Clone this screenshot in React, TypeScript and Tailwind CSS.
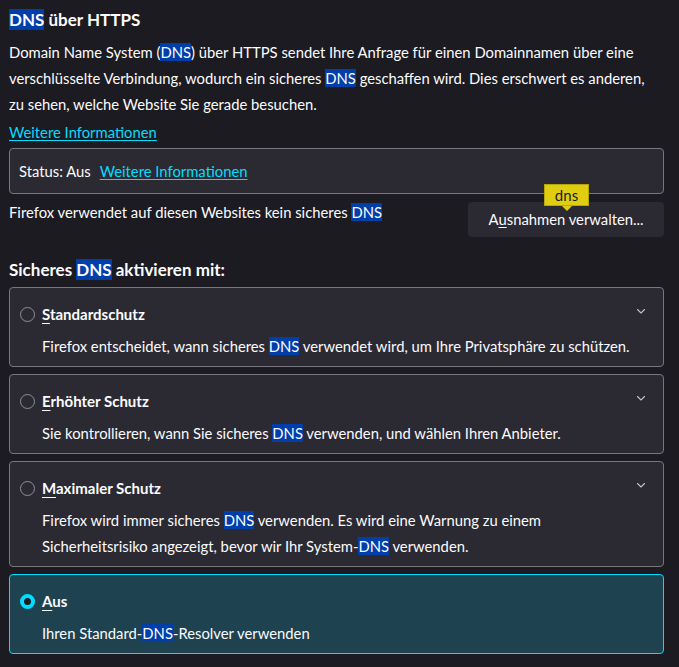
import React from "react";

const Hl = ({ children }: { children: React.ReactNode }) => (
  <span className="bg-[#003eaa] text-[#fbfbfe]">{children}</span>
);

const Chevron = () => (
  <svg width="12" height="12" viewBox="0 0 12 12" className="text-[#bfbfc9]">
    <path d="M2.5 4.5 L6 8 L9.5 4.5" fill="none" stroke="currentColor" strokeWidth="1.1" strokeLinecap="round" strokeLinejoin="round" />
  </svg>
);

type CardProps = {
  accessKey: string;
  rest: string;
  selected?: boolean;
  children: React.ReactNode;
  chevron?: boolean;
};

const Card = ({ accessKey, rest, selected, children, chevron = true }: CardProps) => (
  <div
    className={
      selected
        ? "rounded-[4px] border border-[#00ddff] bg-[#1e4250] pl-[10px] pr-[16px] pt-[14px] pb-[7px]"
        : "rounded-[4px] border border-[#77767f] bg-[#2b2a33] pl-[10px] pr-[16px] pt-[14px] pb-[7px]"
    }
  >
    <div className="flex h-[24px] items-center">
      {selected ? (
        <span className="box-border h-[15px] w-[15px] rounded-full border-[4px] border-[#00ddff] bg-[#1c1b22]" />
      ) : (
        <span className="box-border h-[15px] w-[15px] rounded-full border border-[#8f8f9d] bg-[#2b2a33]" />
      )}
      <span className="ml-[7px] flex-1 text-[15px] font-bold">
        <span className="underline underline-offset-[3px]">{accessKey}</span>
        {rest}
      </span>
      {chevron && !selected ? (
        <span className="-mt-[6px]">
          <Chevron />
        </span>
      ) : null}
    </div>
    <div className="mt-[7px] pl-[22px] text-[14.8px] leading-[26px]">{children}</div>
  </div>
);

export default function App() {
  return (
    <div
      className="min-h-[667px] w-full bg-[#1c1b22] text-[#fbfbfe]"
      style={{ fontFamily: 'Lato, "Noto Sans", sans-serif' }}
    >
      <div className="ml-[9px] w-[655px] pt-[8px] pb-[12px]">
        <h1 className="text-[17px] font-bold leading-[24px]">
          <Hl>DNS</Hl> über HTTPS
        </h1>
        <p className="mt-[7px] text-[14.8px] leading-[26px]">
          Domain Name System (<Hl>DNS</Hl>) über HTTPS sendet Ihre Anfrage für einen Domainnamen über eine
          <br />
          verschlüsselte Verbindung, wodurch ein sicheres <Hl>DNS</Hl> geschaffen wird. Dies erschwert es anderen,
          <br />
          zu sehen, welche Website Sie gerade besuchen.
        </p>
        <div className="mt-[2px] text-[14.8px] leading-[26px]">
          <a className="text-[#00ddff] underline underline-offset-[2px]">Weitere Informationen</a>
        </div>
        <div className="mt-[3px] flex h-[46px] items-center rounded-[4px] border border-[#77767f] bg-[#2b2a33] px-[9px] text-[14.8px]">
          <span>Status: Aus</span>
          <a className="ml-[9px] text-[#00ddff] underline underline-offset-[2px]">Weitere Informationen</a>
        </div>
        <div className="mt-[5px] flex items-start justify-between">
          <span className="text-[14.8px] leading-[26px]">
            Firefox verwendet auf diesen Websites kein sicheres <Hl>DNS</Hl>
          </span>
          <div className="relative mt-[3px]">
            <button className="flex h-[35px] w-[196px] items-center justify-center rounded-[4px] bg-[#2b2a33] text-[14.8px] text-[#fbfbfe]">
              A<span className="underline underline-offset-[2px]">u</span>snahmen verwalten...
            </button>
            <div className="absolute left-[76px] top-[-18px] flex h-[22px] w-[45px] items-center justify-center border border-[#b5a70a] bg-[#e0cd12] text-[15px] leading-none text-[#1c1b22]">
              dns
              <span className="absolute bottom-[-6px] left-1/2 h-0 w-0 -translate-x-1/2 border-x-[5px] border-t-[5px] border-x-transparent border-t-[#e0cd12]" />
            </div>
          </div>
        </div>
        <h2 className="mt-[21px] text-[17px] font-bold leading-[24px]">
          Sicheres <Hl>DNS</Hl> aktivieren mit:
        </h2>
        <div className="mt-[5px] flex flex-col gap-[7px]">
          <Card accessKey="S" rest="tandardschutz">
            Firefox entscheidet, wann sicheres <Hl>DNS</Hl> verwendet wird, um Ihre Privatsphäre zu schützen.
          </Card>
          <Card accessKey="E" rest="rhöhter Schutz">
            Sie kontrollieren, wann Sie sicheres <Hl>DNS</Hl> verwenden, und wählen Ihren Anbieter.
          </Card>
          <Card accessKey="M" rest="aximaler Schutz">
            Firefox wird immer sicheres <Hl>DNS</Hl> verwenden. Es wird eine Warnung zu einem
            <br />
            Sicherheitsrisiko angezeigt, bevor wir Ihr System-<Hl>DNS</Hl> verwenden.
          </Card>
          <Card accessKey="A" rest="us" selected>
            Ihren Standard-<Hl>DNS</Hl>-Resolver verwenden
          </Card>
        </div>
      </div>
    </div>
  );
}
